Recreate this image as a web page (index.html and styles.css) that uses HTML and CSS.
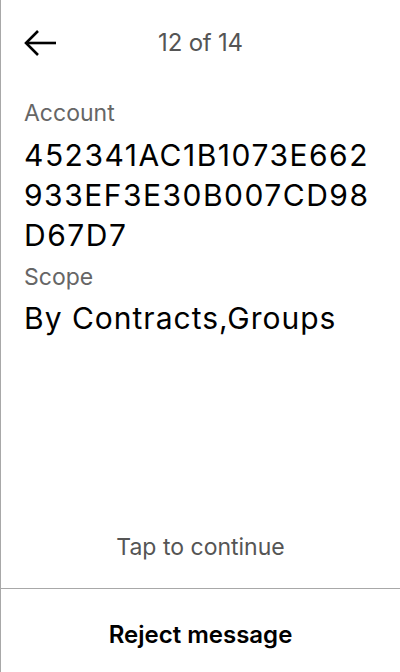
FILE: index.html
```html
<!DOCTYPE html>
<html>
<head>
<meta charset="utf-8">
<link rel="stylesheet" href="styles.css">
</head>
<body>
<div class="screen">
  <header class="header">
    <button class="back" aria-label="Back">
      <svg width="32" height="26" viewBox="0 0 32 26" fill="none" stroke="#000" stroke-width="2.6" stroke-linecap="butt" stroke-linejoin="miter">
        <path d="M2 13 H32"/>
        <path d="M14 1 L2 13 L14 25"/>
      </svg>
    </button>
    <div class="title">12 of 14</div>
    <div class="spacer"></div>
  </header>
  <main class="content">
    <div class="label">Account</div>
    <div class="value hex">452341AC1B1073E662933EF3E30B007CD98D67D7</div>
    <div class="label">Scope</div>
    <div class="value">By Contracts,Groups</div>
  </main>
  <div class="tap">Tap to continue</div>
  <div class="reject">Reject message</div>
</div>
</body>
</html>
```
FILE: styles.css
```css
* { box-sizing: border-box; }
html, body { margin: 0; padding: 0; background: #fff; }
body { font-family: Inter, "Noto Sans", sans-serif; color: #000; }
.screen {
  width: 400px;
  height: 672px;
  border-left: 1px solid #a8a8a8;
  display: flex;
  flex-direction: column;
}
.header {
  height: 84px;
  flex: none;
  display: flex;
  align-items: center;
  padding: 0 23px;
}
.back {
  border: 0;
  background: none;
  padding: 0;
  margin-top: 2px;
  width: 32px;
  height: 26px;
  display: flex;
}
.title {
  flex: 1;
  text-align: center;
  font-size: 24px;
  line-height: 29px;
  color: #555;
  letter-spacing: -0.2px;
}
.spacer { width: 32px; }
.content {
  flex: 1;
  padding: 15px 23px 0;
}
.label {
  font-size: 23px;
  color: #666;
  line-height: 28px;
}
.value {
  font-size: 30px;
  line-height: 39px;
  letter-spacing: 1px;
  margin: 8px 0 8px;
}
.hex {
  word-break: break-all;
  letter-spacing: 1.5px;
  line-height: 40px;
}
.tap {
  text-align: center;
  font-size: 23px;
  line-height: 28px;
  color: #555;
  padding-bottom: 27px;
}
.reject {
  height: 84px;
  flex: none;
  border-top: 1px solid #a8a8a8;
  text-align: center;
  padding-top: 31px;
  font-size: 24px;
  line-height: 29px;
  font-weight: 600;
}
```
